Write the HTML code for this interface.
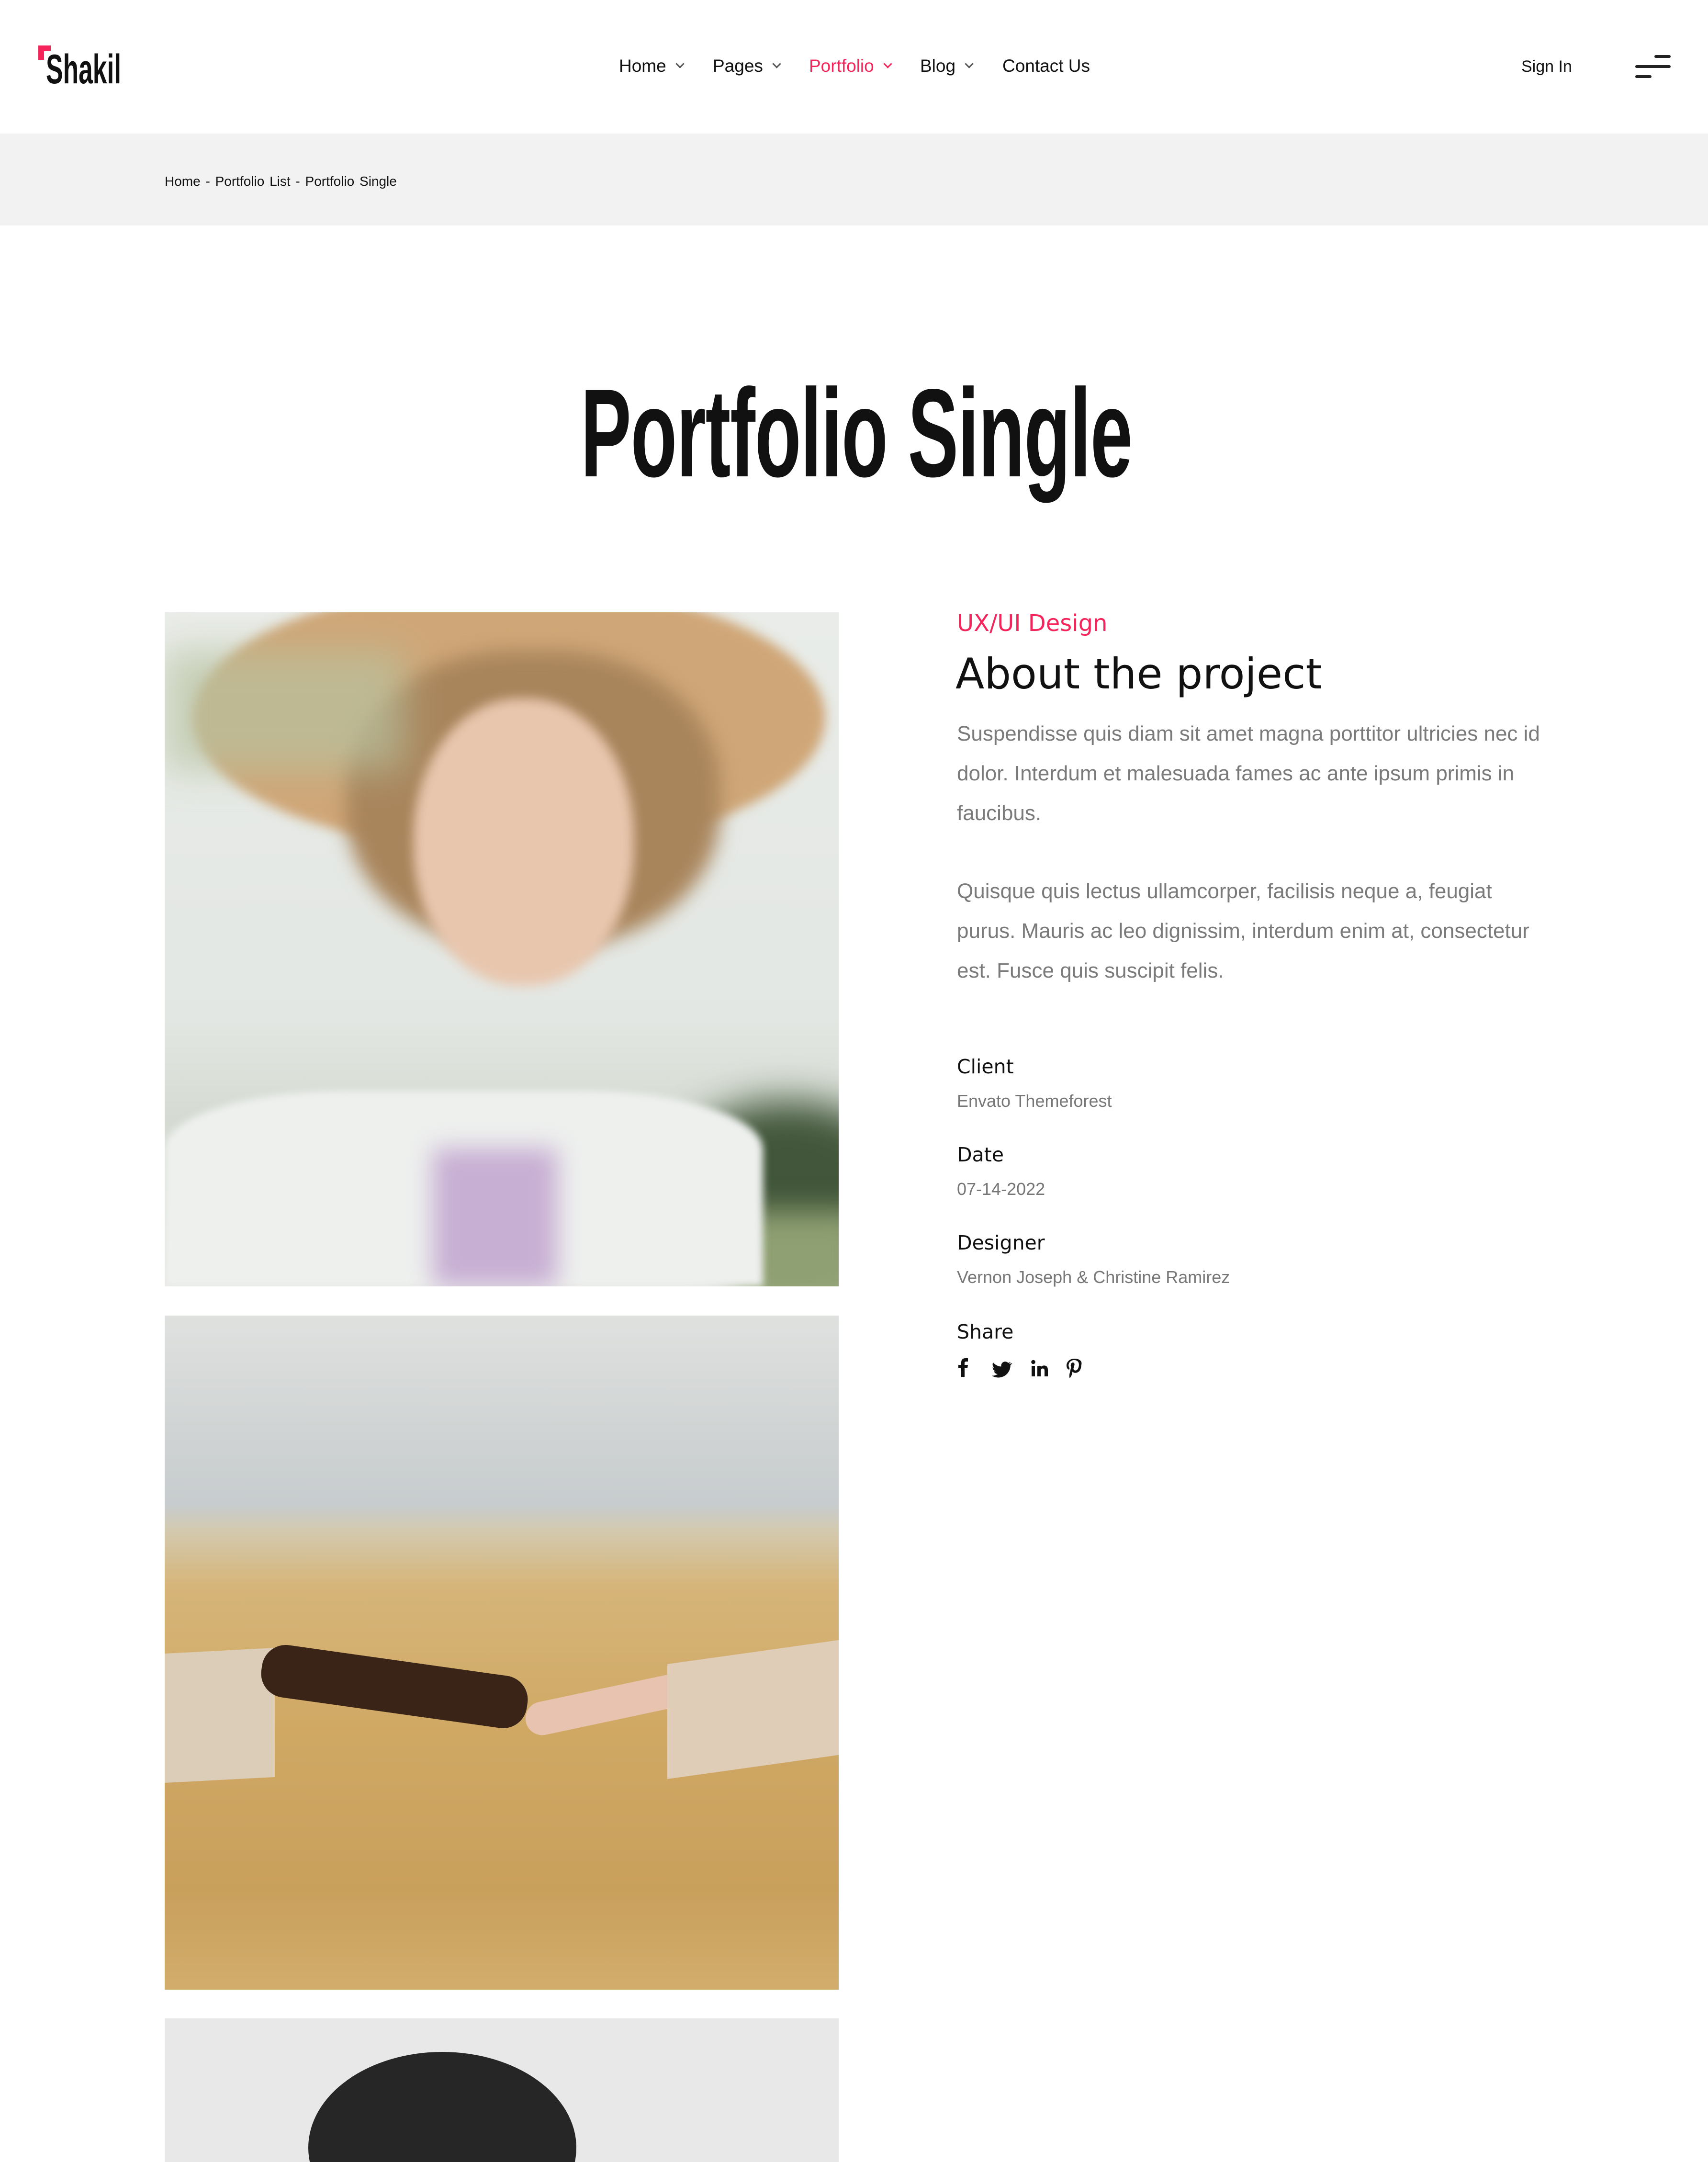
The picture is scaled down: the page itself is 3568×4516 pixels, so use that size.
<!DOCTYPE html>
<html><head><meta charset="utf-8"><style>
*{margin:0;padding:0;box-sizing:border-box}
body{width:3568px;height:4500px;position:relative;background:#fff;overflow:hidden;font-family:"Liberation Sans",sans-serif;color:#111}
.a{position:absolute;white-space:nowrap}
.nav{font-size:37px;top:118px;line-height:40px;color:#111}
.chev{display:inline-block;width:13px;height:13px;border-right:3px solid #555;border-bottom:3px solid #555;transform:rotate(45deg);margin-left:22px;vertical-align:10px}
.p{font-size:44px;color:#7a7a7a;line-height:83px;left:1999px;width:1236px;white-space:normal}
.lab{font-family:"DejaVu Sans",sans-serif;font-size:41px;color:#111;left:1999px;line-height:50px}
.val{font-size:36px;color:#777;left:1999px;line-height:40px}
.img{position:absolute;left:344px;width:1408px;overflow:hidden}
</style></head><body>
<!-- header -->
<div class="a" style="left:80px;top:95px;width:12px;height:30px;background:#f5245b"></div>
<div class="a" style="left:80px;top:95px;width:26px;height:12px;background:#f5245b"></div>
<div class="a" style="left:96px;top:100px;font-size:86px;line-height:90px;font-weight:bold;transform:scaleX(0.62);transform-origin:left;color:#111">Shakil</div>
<div class="a nav" style="left:1293px">Home<span class="chev"></span></div>
<div class="a nav" style="left:1489px">Pages<span class="chev"></span></div>
<div class="a nav" style="left:1690px;color:#f5245b">Portfolio<span class="chev" style="border-color:#f5245b"></span></div>
<div class="a nav" style="left:1922px">Blog<span class="chev"></span></div>
<div class="a nav" style="left:2094px">Contact Us</div>
<div class="a" style="left:3178px;top:121px;font-size:34px;line-height:36px">Sign In</div>
<div class="a" style="left:3456px;top:115px;width:34px;height:6px;border-radius:3px;background:#222"></div>
<div class="a" style="left:3416px;top:136px;width:74px;height:6px;border-radius:3px;background:#222"></div>
<div class="a" style="left:3416px;top:157px;width:34px;height:6px;border-radius:3px;background:#222"></div>
<!-- breadcrumb -->
<div class="a" style="left:0;top:279px;width:3568px;height:192px;background:#f2f2f2"></div>
<div class="a" style="left:344px;top:363px;font-size:28px;line-height:32px;color:#111;word-spacing:3px">Home - Portfolio List - Portfolio Single</div>
<!-- title -->
<div class="a" style="left:1213px;top:770px;font-size:262px;line-height:270px;font-weight:bold;transform:scaleX(0.605);transform-origin:left;color:#111;letter-spacing:-2px">Portfolio Single</div>
<!-- images -->
<div class="img" style="top:1279px;height:1408px;background:linear-gradient(180deg,#e9ece8 0%,#e3e7e3 60%,#d5dbd2 75%,#e6e8e4 100%)">
 <div class="a" style="left:1050px;top:1020px;width:500px;height:360px;border-radius:50%;background:#41563a;filter:blur(40px)"></div>
 <div class="a" style="left:1200px;top:1250px;width:260px;height:200px;background:#8fa072;filter:blur(30px)"></div>
 <div class="a" style="left:60px;top:-60px;width:1320px;height:560px;border-radius:50%;background:#cfa677;filter:blur(12px)"></div>
 <div class="a" style="left:380px;top:80px;width:780px;height:620px;border-radius:45%;background:#a9855c;filter:blur(20px)"></div>
 <div class="a" style="left:520px;top:180px;width:460px;height:600px;border-radius:48%;background:#e8c6ae;filter:blur(12px)"></div>
 <div class="a" style="left:0;top:1000px;width:1250px;height:408px;border-radius:30% 30% 0 0;background:#eef0ee;filter:blur(8px)"></div>
 <div class="a" style="left:560px;top:1120px;width:260px;height:288px;background:#c7aed3;filter:blur(25px)"></div>
 <div class="a" style="left:0;top:80px;width:500px;height:250px;background:#b7c2a0;filter:blur(40px);opacity:.7"></div>
</div>
<div class="img" style="top:2748px;height:1408px;background:linear-gradient(180deg,#dfe1df 0%,#cfd3d3 18%,#c7ccce 28%,#d3c9ae 32%,#d6b57a 40%,#d0a965 60%,#c99f5c 85%,#d2ad6c 100%)">
 <div class="a" style="left:0;top:700px;width:230px;height:270px;background:#dccdb8;transform:skewY(-3deg)"></div>
 <div class="a" style="left:200px;top:720px;width:560px;height:110px;border-radius:50px;background:#3a2418;transform:rotate(8deg)"></div>
 <div class="a" style="left:750px;top:770px;width:420px;height:70px;border-radius:40px;background:#e8c4b0;transform:rotate(-12deg)"></div>
 <div class="a" style="left:1050px;top:700px;width:400px;height:240px;background:#e0cdb7;transform:skewY(-8deg)"></div>
</div>
<div class="img" style="top:4216px;height:300px;background:#e8e8e8">
 <div class="a" style="left:300px;top:70px;width:560px;height:400px;border-radius:50%;background:#262626"></div>
</div>
<!-- right column -->
<div class="a" style="left:1999px;top:1274px;font-family:'DejaVu Sans',sans-serif;font-size:48px;line-height:56px;color:#f5245b">UX/UI Design</div>
<div class="a" style="left:1996px;top:1355px;font-family:'DejaVu Sans',sans-serif;font-size:88px;line-height:106px;color:#111">About the project</div>
<div class="a p" style="top:1491px">Suspendisse quis diam sit amet magna porttitor ultricies nec id dolor. Interdum et malesuada fames ac ante ipsum primis in faucibus.</div>
<div class="a p" style="top:1820px">Quisque quis lectus ullamcorper, facilisis neque a, feugiat purus. Mauris ac leo dignissim, interdum enim at, consectetur est. Fusce quis suscipit felis.</div>
<div class="a lab" style="top:2203px">Client</div>
<div class="a val" style="top:2280px">Envato Themeforest</div>
<div class="a lab" style="top:2387px">Date</div>
<div class="a val" style="top:2464px">07-14-2022</div>
<div class="a lab" style="top:2571px">Designer</div>
<div class="a val" style="top:2648px">Vernon Joseph &amp; Christine Ramirez</div>
<div class="a lab" style="top:2757px">Share</div>
<svg class="a" style="left:1996px;top:2836px" width="270" height="44" viewBox="0 0 270 44">
 <path d="M12 40V22H6v-7h6V10c0-6 3-9 9-9h5v7h-3c-3 0-4 1-4 3v4h7l-1 7h-6v18z" fill="#111"/>
 <g transform="translate(18,0)"><path d="M98 12c-1.5.7-3 1-4.6 1.3 1.7-1 2.9-2.6 3.5-4.4-1.6.9-3.3 1.6-5 1.9-3.2-3.4-8.5-3.5-11.9-.3-2.2 2.1-3.1 5.1-2.4 8-6.6-.3-12.7-3.4-16.9-8.5-2.2 3.8-1.1 8.6 2.5 11-1.3 0-2.6-.4-3.7-1 0 3.9 2.8 7.3 6.6 8.1-1.2.3-2.5.4-3.8.1 1.1 3.4 4.2 5.7 7.8 5.8-3.5 2.7-7.9 3.9-12.4 3.4 11.8 7.6 27.6 4.2 35.1-7.7 2.6-4 3.9-8.7 3.9-13.5v-.7c1.6-1.2 3-2.6 4.1-4.2z" fill="#111"/></g>
 <rect x="159" y="17" width="7" height="22" fill="#111"/><circle cx="162.5" cy="9" r="4.3" fill="#111"/>
 <path d="M171 17h7v3c1.5-2.5 4-3.6 7-3.6 6 0 8 3.6 8 9.5V39h-7V28c0-3-.5-5.5-3.5-5.5s-4.5 2.2-4.5 5.5v11h-7z" fill="#111"/>
 <g transform="translate(232,2) scale(1.3) translate(-231,-2)"><path d="M244 2c-9 0-13 6-13 11 0 3 1 5.5 3.5 6.5.4.2.8 0 .9-.4l.4-1.5c.1-.5 0-.6-.3-1-.7-.9-1.2-2-1.2-3.6 0-4.6 3.4-8.7 9-8.7 4.9 0 7.6 3 7.6 7 0 5.3-2.3 9.7-5.8 9.7-1.9 0-3.3-1.6-2.9-3.5.6-2.3 1.6-4.8 1.6-6.5 0-1.5-.8-2.8-2.5-2.8-2 0-3.6 2-3.6 4.8 0 1.7.6 2.9.6 2.9l-2.4 10.2c-.7 3-.1 6.7 0 7 0 .2.3.3.4.1.2-.2 2.4-3 3.2-5.7l1.2-4.8c.6 1.2 2.4 2.2 4.3 2.2 5.7 0 9.6-5.2 9.6-12.2C257 7 252.5 2 244 2z" fill="#111"/></g>
</svg>
</body></html>
